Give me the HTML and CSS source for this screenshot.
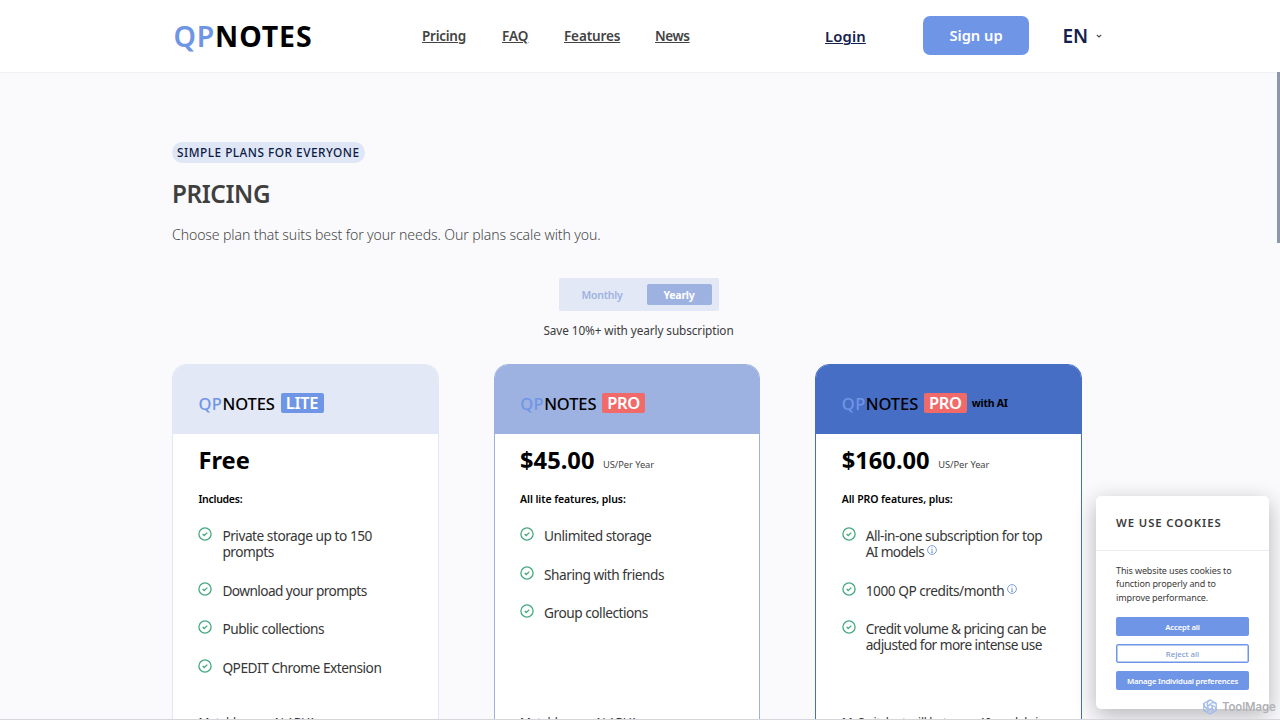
FILE: index.html
```html
<!DOCTYPE html>
<html lang="en">
<head>
<meta charset="utf-8">
<title>QPNotes – Pricing</title>
<link rel="stylesheet" href="styles.css">
</head>
<body>
<svg class="defs" width="0" height="0">
  <symbol id="check" viewBox="0 0 14 14"><circle cx="7" cy="7" r="6.1" fill="none" stroke="#45a97f" stroke-width="1.3"/><path d="M4.7 7.1 6.2 8.5 9.3 5.6" fill="none" stroke="#45a97f" stroke-width="1.3"/></symbol>
  <symbol id="info" viewBox="0 0 10 10"><circle cx="5" cy="5" r="4.4" fill="none" stroke="#7c9cd8" stroke-width="1"/><path d="M4.2 4.4H5.1V7.3M4 7.3H6.2M5 2.4V3.3" fill="none" stroke="#7c9cd8" stroke-width=".9"/></symbol>
</svg>
<header class="topbar">
  <a class="logo"><span class="logo-qp">QP</span><span class="logo-notes">NOTES</span></a>
  <nav class="nav">
    <a class="l-pricing">Pricing</a><a class="l-faq">FAQ</a><a class="l-features">Features</a><a class="l-news">News</a>
  </nav>
  <a class="login">Login</a>
  <a class="signup">Sign up</a>
  <div class="lang"><span>EN</span><svg width="6" height="4" viewBox="0 0 6 4"><path d="M.8.8 3 2.9 5.2.8" fill="none" stroke="#444" stroke-width="1.1"/></svg></div>
</header>
<main class="page">
  <span class="pill">SIMPLE PLANS FOR EVERYONE</span>
  <h1 class="title">PRICING</h1>
  <p class="lead">Choose plan that suits best for your needs. Our plans scale with you.</p>
  <div class="billing">
    <div class="toggle"><span class="monthly">Monthly</span><span class="yearly">Yearly</span></div>
    <p class="save">Save 10%+ with yearly subscription</p>
  </div>
  <div class="plans">
    <section class="plan lite">
      <div class="plan-head"><span class="qp">QP</span><span class="notes">NOTES</span><span class="tag">LITE</span></div>
      <div class="plan-body">
        <div class="price"><b>Free</b></div>
        <p class="incl short">Includes:</p>
        <ul>
          <li><svg class="check"><use href="#check"/></svg><span>Private storage up to 150<br>prompts</span></li>
          <li><svg class="check"><use href="#check"/></svg><span class="tight">Download your prompts</span></li>
          <li><svg class="check"><use href="#check"/></svg><span>Public collections</span></li>
          <li><svg class="check"><use href="#check"/></svg><span>QPEDIT Chrome Extension</span></li>
        </ul>
        <p class="more">Metabb&nbsp; ......... N ADVA</p>
      </div>
    </section>
    <section class="plan pro">
      <div class="plan-head"><span class="qp">QP</span><span class="notes">NOTES</span><span class="tag">PRO</span></div>
      <div class="plan-body">
        <div class="price"><b>$45.00</b><small>US/Per Year</small></div>
        <p class="incl">All lite features, plus:</p>
        <ul>
          <li><svg class="check"><use href="#check"/></svg><span>Unlimited storage</span></li>
          <li><svg class="check"><use href="#check"/></svg><span>Sharing with friends</span></li>
          <li><svg class="check"><use href="#check"/></svg><span>Group collections</span></li>
        </ul>
        <p class="more">Metabb&nbsp; ......... N ADVA</p>
      </div>
    </section>
    <section class="plan ai">
      <div class="plan-head"><span class="qp">QP</span><span class="notes">NOTES</span><span class="tag">PRO</span><span class="with">with AI</span></div>
      <div class="plan-body">
        <div class="price"><b>$160.00</b><small>US/Per Year</small></div>
        <p class="incl">All PRO features, plus:</p>
        <ul>
          <li><svg class="check"><use href="#check"/></svg><span>All-in-one subscription for top<br><span class="models">AI models</span><svg class="info"><use href="#info"/></svg></span></li>
          <li><svg class="check"><use href="#check"/></svg><span>1000 QP credits/month<svg class="info"><use href="#info"/></svg></span></li>
          <li><svg class="check"><use href="#check"/></svg><span class="tight">Credit volume &amp; pricing can be<br>adjusted for more intense use</span></li>
        </ul>
        <p class="more">M. Switch at will between AI models in</p>
      </div>
    </section>
  </div>
</main>
<div class="scroll-thumb"></div>
<aside class="cookies">
  <h2>WE USE COOKIES</h2>
  <div class="cookies-body">
    <p>This website uses cookies to<br>function properly and to<br>improve performance.</p>
    <a class="btn accept">Accept all</a>
    <a class="btn reject">Reject all</a>
    <a class="btn manage">Manage Individual preferences</a>
  </div>
</aside>
<div class="watermark">
  <svg width="16" height="16" viewBox="0 0 16 16" fill="none" stroke="#a3bdec" stroke-width="1.3"><path d="M8 .9 14.2 4.4V11.6L8 15.1 1.8 11.6V4.4Z"/><circle cx="8" cy="8" r="2.2"/><path d="M8 .9C4.5 3 4.5 5 5.8 8M14.2 4.4C10.500 2.800 8.500 4 7 6.100M14.200 11.600C14 8 12 6.500 9.200 6.100M8 15.100C11.500 13 11.500 11 10.200 8M1.800 11.600C5.500 13.200 7.500 12 9 9.900M1.800 4.400C2 8 4 9.500 6.800 9.900"/></svg>
  <span>ToolMage</span>
</div>
<div class="edge"></div>
</body>
</html>
```
FILE: styles.css
```css
* { box-sizing: border-box; }
html { height: 720px; overflow: hidden; }
body { margin: 0; width: 1280px; height: 720px; overflow: hidden; background: #fafafd; font-family: "Noto Sans", "Open Sans", sans-serif; color: #3b3b3b; }
h1, h2, p, ul { margin: 0; padding: 0; font-weight: inherit; }
.defs { position: absolute; }

.topbar { height: 73px; background: #fff; border-bottom: 1px solid #f1f1f4; display: flex; align-items: center; padding-left: 173.5px; white-space: nowrap; }
.logo { width: 248.5px; font-size: 28.5px; color: #000; line-height: 40px; }
.logo-qp { color: #6f95e6; font-weight: 650; letter-spacing: .8px; }
.logo-notes { font-weight: 700; letter-spacing: .9px; }
.nav { display: flex; width: 403px; font-size: 13.5px; font-weight: 560; color: #434343; line-height: 20px; }
.nav a, .login { text-decoration: underline; text-underline-offset: 1px; text-decoration-thickness: 1px; }
.nav a { display: block; }
.l-pricing { width: 80px; letter-spacing: -.25px; }
.l-faq { width: 62px; }
.l-features { width: 91px; letter-spacing: -.14px; }
.l-news { letter-spacing: -.4px; }
.login { width: 98px; font-size: 14.8px; font-weight: 570; color: #14214d; letter-spacing: .15px; }
.signup { width: 106px; height: 39px; border-radius: 7px; background: #6f95e6; color: #fff; font-size: 14.7px; font-weight: 600; line-height: 39px; text-align: center; margin: -1px 33.5px 0 0; }
.lang { display: flex; align-items: center; gap: 8px; font-size: 19px; font-weight: 570; color: #14214d; line-height: 24px; margin-top: -1px; }

.page { margin-left: 172px; width: 910px; height: 647px; overflow: hidden; padding-top: 69px; }
.pill { display: block; width: 193px; height: 21px; border-radius: 11px; background: #dfe6f5; padding-left: 5px; font-size: 11.8px; font-weight: 550; letter-spacing: .5px; line-height: 21px; color: #0d1a45; white-space: nowrap; }
.title { margin-top: 13px; font-size: 24.3px; font-weight: 580; letter-spacing: -.4px; line-height: 36.5px; color: #3f3f3f; }
.lead { margin-top: 12.5px; font-size: 14.1px; font-weight: 340; letter-spacing: -.12px; line-height: 20px; color: #484848; white-space: nowrap; }
.billing { margin-top: 33px; padding-left: 23px; display: flex; flex-direction: column; align-items: center; }
.toggle { width: 160px; height: 33px; background: #e2e8f6; border-radius: 2px; padding: 6px 7px 6px 0; display: flex; justify-content: space-between; font-size: 10.5px; line-height: 22px; }
.monthly { width: 87px; text-align: center; font-weight: 600; color: #9eb2e1; letter-spacing: -.22px; }
.yearly { width: 65px; height: 21px; text-align: center; font-weight: 700; color: #fff; background: #9eb2e1; border-radius: 2px; letter-spacing: -.25px; }
.save { margin-top: 9px; font-size: 11.8px; letter-spacing: -.1px; line-height: 20px; white-space: nowrap; }
.billing { padding-left: 22px; }
.toggle, .save { margin-left: 1px; }

.plans { margin-top: 24px; display: grid; grid-template-columns: repeat(3, 1fr); gap: 55px; }
.plan { --c: #e2e8f6; height: 460px; border: 1px solid var(--c); border-radius: 14px 14px 0 0; background: #fff; overflow: hidden; }
.pro { --c: #9eb2e1; }
.ai { --c: #476ec5; }
.plan-head { height: 69px; padding: 7px 0 0 25.5px; background: var(--c); display: flex; align-items: center; font-size: 16.5px; font-weight: 540; color: #000; white-space: nowrap; }
.qp { color: #6f95e6; width: 24px; letter-spacing: .4px; }
.notes { width: 58px; letter-spacing: -.1px; }
.tag { width: 43px; height: 20px; border-radius: 2px; background: #f06a6a; color: #fff; font-weight: 600; letter-spacing: -.35px; line-height: 20px; text-align: center; }
.lite .tag { background: #6f95e6; }
.with { margin-left: 5px; font-size: 10.5px; font-weight: 700; letter-spacing: -.25px; }
.plan-body { padding-left: 25.4px; color: #363636; }
.price { height: 52px; display: flex; align-items: baseline; gap: 8.5px; line-height: 52px; color: #000; }
.price b { font-size: 23.7px; }
.price small { font-size: 9.3px; letter-spacing: -.04px; color: #444; position: relative; top: -1px; }
.incl { height: 24px; font-size: 10.5px; font-weight: 600; letter-spacing: -.08px; line-height: 26px; color: #000; white-space: nowrap; }
.incl.short { letter-spacing: -.27px; }
ul { margin-top: 17px; height: 180px; list-style: none; display: flex; flex-direction: column; gap: 22.6px; }
li { display: flex; gap: 10px; font-size: 13.7px; letter-spacing: -.48px; line-height: 16px; white-space: nowrap; }
li > span { padding-top: 1px; margin-bottom: -1px; }
.tight { letter-spacing: -.58px; }
.models { letter-spacing: -.66px; }
.check { width: 14px; height: 14px; flex: none; }
.info { width: 10px; height: 10px; margin-left: 3px; vertical-align: 2px; }
.more { margin-top: 7px; font-size: 12px; letter-spacing: -.3px; line-height: 18px; white-space: nowrap; }

.scroll-thumb { position: absolute; left: 1277px; top: 72px; width: 3px; height: 171px; background: #8d97ad; }
.cookies { position: absolute; left: 1096px; top: 496px; width: 173px; height: 213px; background: #fff; border-radius: 5px; box-shadow: 0 6px 22px rgba(0, 0, 0, .28); }
.cookies h2 { height: 55px; padding-left: 20px; border-bottom: 1px solid #ececef; font-size: 11.3px; font-weight: 600; letter-spacing: .92px; line-height: 54px; white-space: nowrap; }
.cookies-body { padding: 13px 20px 0; display: flex; flex-direction: column; gap: 8px; }
.cookies-body p { font-size: 9px; letter-spacing: -.12px; line-height: 13.3px; white-space: nowrap; margin-bottom: 5px; }
.btn { height: 19px; border-radius: 2px; background: #6f95e6; color: #fff; font-size: 7.8px; font-weight: 650; letter-spacing: -.24px; line-height: 20px; text-align: center; white-space: nowrap; }
.reject { background: #fff; border: 1px solid #6f95e6; box-shadow: inset 0 0 0 .5px #6f95e6; color: #7f9bd6; font-weight: 500; letter-spacing: -.02px; line-height: 18px; }
.watermark { position: absolute; left: 1202px; top: 699px; display: flex; align-items: center; gap: 4px; font-family: Inter, sans-serif; font-size: 11.4px; font-weight: 600; letter-spacing: -.1px; line-height: 16px; color: #b0b1b5; }
.edge { position: absolute; left: 0; top: 719px; width: 1280px; height: 1px; background: #d6d6da; }
```
